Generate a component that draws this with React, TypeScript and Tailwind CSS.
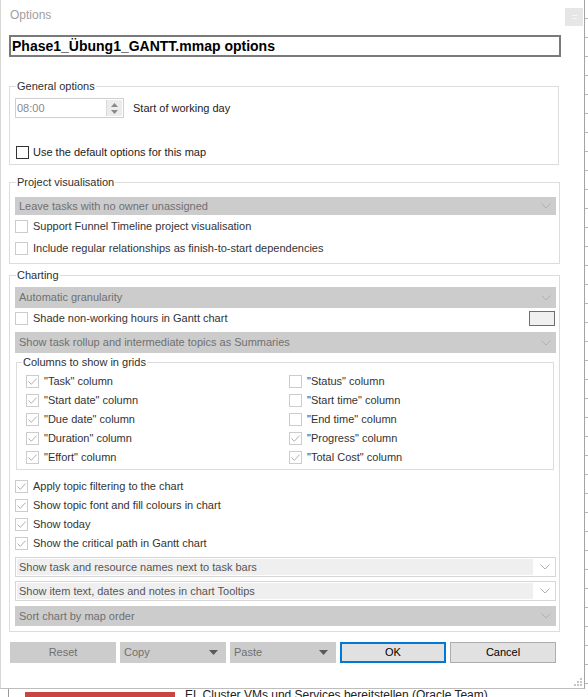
import React from "react";

type Tone = "enabled" | "disabled";

// Small square checkbox as drawn by the WinForms dialog
function Box({ checked = false, tone = "disabled" }: { checked?: boolean; tone?: Tone }) {
  return (
    <span
      className={
        tone === "enabled"
          ? "w-[13px] h-[13px] shrink-0 border border-[#333333] bg-white flex items-center justify-center"
          : "w-[13px] h-[13px] shrink-0 border border-[#cccccc] bg-white flex items-center justify-center"
      }
    >
      {checked && (
        <svg width="11" height="11" viewBox="0 0 11 11">
          <path d="M1.5 5.5 L4.3 8.3 L9.6 2.6" fill="none" stroke="#b0b0b0" strokeWidth="1" />
        </svg>
      )}
    </span>
  );
}

function Check({
  label,
  checked,
  tone,
  className = "",
}: {
  label: string;
  checked?: boolean;
  tone?: Tone;
  className?: string;
}) {
  return (
    <div className={`flex items-center h-[19px] ${className}`}>
      <Box checked={checked} tone={tone} />
      <span className="ml-[5px] whitespace-nowrap">{label}</span>
    </div>
  );
}

function Chevron() {
  return (
    <svg width="10" height="6" viewBox="0 0 10 6">
      <path d="M0.5 0.5 L5 5 L9.5 0.5" fill="none" stroke="#b0b0b0" strokeWidth="1" />
    </svg>
  );
}

// Disabled combo box (flat grey); height comes from the caller
function GreySelect({ text, className = "" }: { text: string; className?: string }) {
  return (
    <div
      className={`bg-[#cccccc] flex items-center justify-between pl-[4px] pr-[5px] text-[#707070] ${className}`}
    >
      <span className="whitespace-nowrap">{text}</span>
      <Chevron />
    </div>
  );
}

// Combo box with the light inner edit field
function LightSelect({ text, className = "" }: { text: string; className?: string }) {
  return (
    <div className={`h-[20px] border border-[#d6d6d6] bg-white flex items-stretch p-[1px] ${className}`}>
      <div className="w-[516px] bg-[#efefef] flex items-center pl-[2px] text-[#555555] whitespace-nowrap">
        {text}
      </div>
      <div className="flex-1 flex items-center justify-center pl-[2px]">
        <Chevron />
      </div>
    </div>
  );
}

function Legend({ children, className = "ml-[6px]" }: { children: React.ReactNode; className?: string }) {
  return <legend className={`${className} px-[1px] leading-[13px] text-[#2f2f2f]`}>{children}</legend>;
}

function Button({
  label,
  variant,
}: {
  label: string;
  variant: "disabled" | "menu" | "default" | "normal";
}) {
  if (variant === "menu") {
    return (
      <div className="w-[106px] h-[21px] bg-[#cccccc] flex items-center justify-between pl-[4px] pr-[8px] text-[#707070]">
        <span>{label}</span>
        <svg width="9" height="5" viewBox="0 0 9 5">
          <path d="M0 0 L9 0 L4.5 5 Z" fill="#5a5a5a" />
        </svg>
      </div>
    );
  }
  if (variant === "disabled") {
    return (
      <div className="w-[106px] h-[21px] bg-[#cccccc] flex items-center justify-center text-[#707070]">
        {label}
      </div>
    );
  }
  if (variant === "default") {
    return (
      <div className="w-[106px] h-[21px] bg-[#e1e1e1] border-2 border-[#0078d7] flex items-center justify-center text-black">
        {label}
      </div>
    );
  }
  return (
    <div className="w-[106px] h-[21px] bg-[#e1e1e1] border border-[#adadad] flex items-center justify-center text-black">
      {label}
    </div>
  );
}

const leftColumns = [
  { label: '"Task" column', checked: true },
  { label: '"Start date" column', checked: true },
  { label: '"Due date" column', checked: true },
  { label: '"Duration" column', checked: true },
  { label: '"Effort" column', checked: true },
];

const rightColumns = [
  { label: '"Status" column', checked: false },
  { label: '"Start time" column', checked: false },
  { label: '"End time" column', checked: false },
  { label: '"Progress" column', checked: true },
  { label: '"Total Cost" column', checked: true },
];

export default function App() {
  return (
    <div className="w-[588px] h-[697px] overflow-hidden bg-white flex flex-col font-['Liberation_Sans',Arial,sans-serif] text-[11px] text-[#333333]">
      <div className="flex h-[689px] shrink-0">
        <div className="relative w-[585px] h-[689px] bg-white border-l border-r border-b border-l-[#d6d6d6] border-r-[#a3a3a3] border-b-[#bdbdbd] flex flex-col">
          {/* Title bar */}
          <div className="flex items-start justify-between pt-[8px] pl-[9px] pr-[1px]">
            <span className="text-[12px] leading-[14px] text-[#a0a0a0]">Options</span>
            <div className="w-[18px] h-[18px] bg-[#e6e6e6] flex items-center justify-center">
              <svg width="5" height="4" viewBox="0 0 5 4">
                <path d="M0 0.5 H5 M0 3.5 H5" stroke="#f7f7f7" strokeWidth="1" />
              </svg>
            </div>
          </div>

          {/* Map name */}
          <div className="mt-[9px] ml-[8px] w-[552px] h-[22px] border-2 border-[#7a7a7a] flex items-center pl-[1px]">
            <span className="text-[14px] leading-[18px] font-bold text-black">Phase1_Übung1_GANTT.mmap options</span>
          </div>

          {/* General options */}
          <fieldset className="mt-[23px] ml-[8px] w-[550px] border border-[#dcdcdc]">
            <Legend>General options</Legend>
            <div className="flex flex-col pb-[2px]">
              <div className="mt-[5px] flex items-center">
                <div className="ml-[5px] w-[109px] h-[20px] border border-[#cfcfcf] bg-white flex">
                  <span className="flex-1 pl-[1px] leading-[18px] text-[#8a8a8a]">08:00</span>
                  <div className="w-[16px] my-[1px] mr-[1px] bg-[#ececec] border-l border-[#dadada] flex flex-col items-center justify-center gap-[3px]">
                    <svg width="7" height="4" viewBox="0 0 7 4">
                      <path d="M0 4 L3.5 0 L7 4 Z" fill="#8a8a8a" />
                    </svg>
                    <svg width="7" height="4" viewBox="0 0 7 4">
                      <path d="M0 0 L7 0 L3.5 4 Z" fill="#8a8a8a" />
                    </svg>
                  </div>
                </div>
                <span className="ml-[9px] text-[#222222]">Start of working day</span>
              </div>
              <div className="mt-[25px] ml-[6px] flex items-center h-[19px]">
                <Box tone="enabled" />
                <span className="ml-[4px] text-[#222222]">Use the default options for this map</span>
              </div>
            </div>
          </fieldset>

          {/* Project visualisation */}
          <fieldset className="mt-[11px] ml-[8px] w-[551px] border border-[#dcdcdc]">
            <Legend>Project visualisation</Legend>
            <div className="flex flex-col pb-[4px]">
              <GreySelect text="Leave tasks with no owner unassigned" className="mt-[8px] ml-[5px] mr-[3px] h-[18px]" />
              <div className="flex items-center h-[22px] ml-[5px]">
                <Box />
                <span className="ml-[5px]">Support Funnel Timeline project visualisation</span>
              </div>
              <div className="flex items-center h-[22px] ml-[5px]">
                <Box />
                <span className="ml-[5px]">Include regular relationships as finish-to-start dependencies</span>
              </div>
            </div>
          </fieldset>

          {/* Charting */}
          <fieldset className="mt-[5px] ml-[8px] w-[551px] border border-[#dcdcdc]">
            <Legend>Charting</Legend>
            <div className="flex flex-col pb-[5px]">
              <GreySelect text="Automatic granularity" className="mt-[5px] ml-[5px] mr-[3px] h-[21px]" />
              <div className="flex items-center justify-between h-[20px] ml-[5px] mr-[4px]">
                <div className="flex items-center">
                  <Box />
                  <span className="ml-[5px]">Shade non-working hours in Gantt chart</span>
                </div>
                <div className="w-[26px] h-[15px] border border-[#6e6e6e] bg-[#f0f0f0]" />
              </div>
              <GreySelect
                text="Show task rollup and intermediate topics as Summaries"
                className="mt-[4px] ml-[5px] mr-[3px] h-[21px]"
              />

              <fieldset className="mt-[3px] ml-[6px] mr-[5px] border border-[#dcdcdc]">
                <Legend className="ml-[5px]">Columns to show in grids</Legend>
                <div className="mt-[3px] pb-[2px] pl-[9px] flex">
                  <div className="w-[263px] flex flex-col">
                    {leftColumns.map((c) => (
                      <Check key={c.label} label={c.label} checked={c.checked} />
                    ))}
                  </div>
                  <div className="flex flex-col">
                    {rightColumns.map((c) => (
                      <Check key={c.label} label={c.label} checked={c.checked} />
                    ))}
                  </div>
                </div>
              </fieldset>

              <div className="mt-[7px] ml-[5px] flex flex-col">
                <Check label="Apply topic filtering to the chart" checked />
                <Check label="Show topic font and fill colours in chart" checked />
                <Check label="Show today" checked />
                <Check label="Show the critical path in Gantt chart" checked />
              </div>

              <LightSelect text="Show task and resource names next to task bars" className="mt-[4px] ml-[5px] mr-[3px]" />
              <LightSelect text="Show item text, dates and notes in chart Tooltips" className="mt-[4px] ml-[5px] mr-[3px]" />
              <GreySelect text="Sort chart by map order" className="mt-[5px] ml-[5px] mr-[3px] h-[20px]" />
            </div>
          </fieldset>

          {/* Dialog buttons */}
          <div className="mt-[10px] ml-[9px] flex gap-[4px]">
            <Button label="Reset" variant="disabled" />
            <Button label="Copy" variant="menu" />
            <Button label="Paste" variant="menu" />
            <Button label="OK" variant="default" />
            <Button label="Cancel" variant="normal" />
          </div>

          {/* Size grip */}
          <svg className="absolute right-[1px] bottom-[1px]" width="9" height="9" viewBox="0 0 9 9">
            <rect x="6" y="0" width="2" height="2" fill="#c4c4c4" />
            <rect x="3" y="3" width="2" height="2" fill="#c4c4c4" />
            <rect x="6" y="3" width="2" height="2" fill="#c4c4c4" />
            <rect x="0" y="6" width="2" height="2" fill="#c4c4c4" />
            <rect x="3" y="6" width="2" height="2" fill="#c4c4c4" />
            <rect x="6" y="6" width="2" height="2" fill="#c4c4c4" />
          </svg>
        </div>

        {/* Gantt grid peeking out on the right */}
        <div className="flex-1 bg-white bg-[repeating-linear-gradient(to_bottom,transparent_0,transparent_18px,#b8b8b8_18px,#b8b8b8_19px)]" />
      </div>

      {/* Gantt row behind the dialog */}
      <div className="h-[8px] overflow-hidden flex items-start bg-white">
        <div className="ml-[8px] w-[1px] h-[8px] bg-[#9a9a9a]" />
        <div className="ml-[16px] mt-[3px] w-[150px] h-[5px] bg-[#c8463f]" />
        <span className="ml-[10px] -mt-[1px] text-[12px] leading-[14px] text-[#222222] whitespace-nowrap">
          EL Cluster VMs und Services bereitstellen (Oracle Team)
        </span>
      </div>
    </div>
  );
}
